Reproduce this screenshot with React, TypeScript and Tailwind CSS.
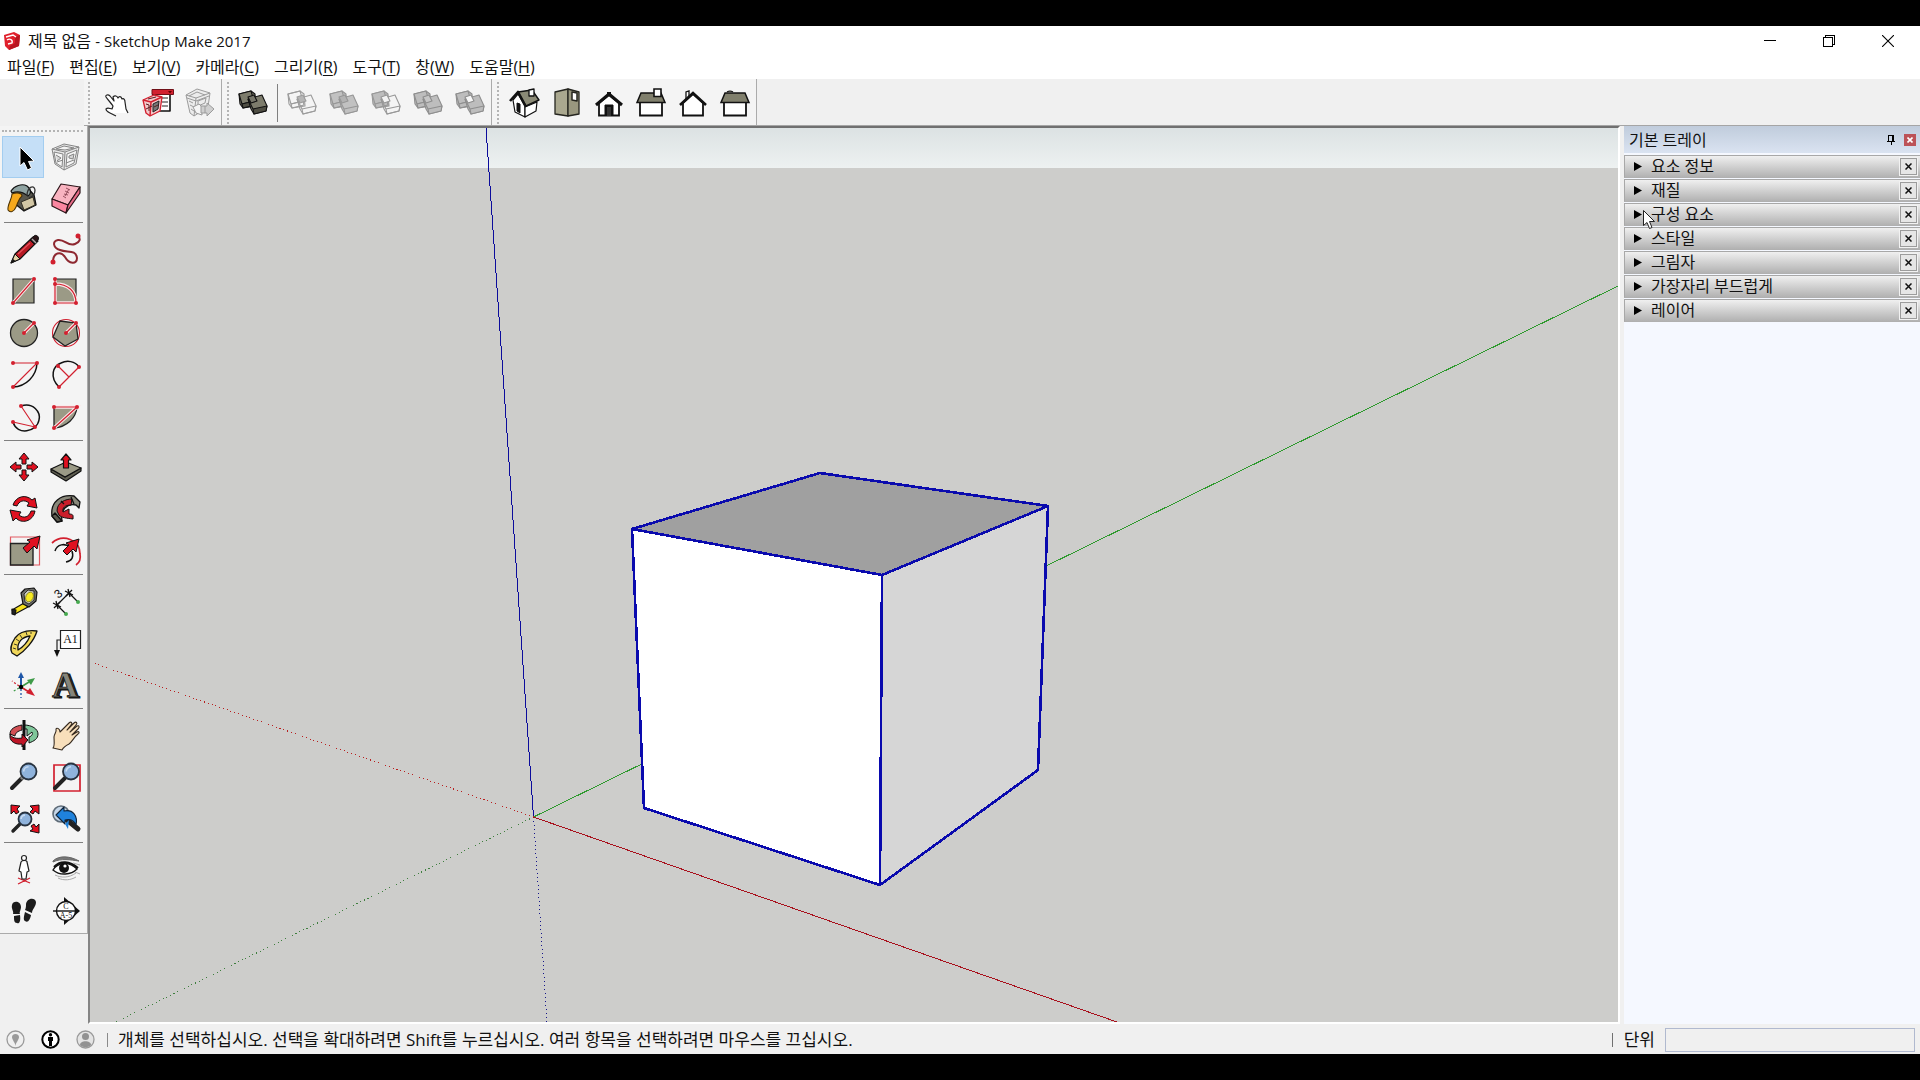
import { useState } from 'react';
import type { ReactNode } from 'react';

const RED = '#e01020';
const CRIMSON = '#d2202f';
const STONE = '#9b9a86';
const INK = '#111111';

// ── Data ─────────────────────────────────────────────────────────────────

const MENUS = [
  { label: '파일', hotkey: 'F' },
  { label: '편집', hotkey: 'E' },
  { label: '보기', hotkey: 'V' },
  { label: '카메라', hotkey: 'C' },
  { label: '그리기', hotkey: 'R' },
  { label: '도구', hotkey: 'T' },
  { label: '창', hotkey: 'W' },
  { label: '도움말', hotkey: 'H' },
];

const PANELS = ['요소 정보', '재질', '구성 요소', '스타일', '그림자', '가장자리 부드럽게', '레이어'];

type Tool = { name: string; art: ReactNode };

// ── Shared icon parts ────────────────────────────────────────────────────

function Icon({ children }: { children: ReactNode }) {
  return (
    <svg className="block h-8 w-8 shrink-0 overflow-visible" viewBox="0 0 32 32" fill="none" aria-hidden="true">
      {children}
    </svg>
  );
}

function Dots({ at }: { at: [number, number][] }) {
  return (
    <>
      {at.map(([x, y]) => (
        <circle key={`${x}-${y}`} cx={x} cy={y} r="2" fill={CRIMSON} />
      ))}
    </>
  );
}

// red guide line with a light halo so it reads over a filled face
function Guide({ d }: { d: string }) {
  return (
    <>
      <path d={d} stroke="#fbe9ea" strokeWidth="3.4" />
      <path d={d} stroke={CRIMSON} strokeWidth="1.2" />
    </>
  );
}

function Arrow({ d }: { d: string }) {
  return <path d={d} fill={RED} stroke={INK} strokeWidth="1" strokeLinejoin="round" />;
}

function Lens({ cx, cy, r }: { cx: number; cy: number; r: number }) {
  return (
    <>
      <circle cx={cx} cy={cy} r={r} fill="#8fb3dc" stroke="#27323f" strokeWidth="1.8" />
      <path
        d={`M${cx - r * 0.6} ${cy} A${r * 0.6} ${r * 0.6} 0 0 1 ${cx} ${cy - r * 0.6}`}
        stroke="#c9dcf1"
        strokeWidth="1.6"
      />
    </>
  );
}

// ── Solid tools: two overlapping slabs ───────────────────────────────────

type SlabProps = { back: string; front: string; overlap: string; line: string; side?: string };

function Slabs({ back, front, overlap, line, side }: SlabProps) {
  return (
    <g stroke={line} strokeWidth="1.1" strokeLinejoin="round">
      <path d="M2 7 L14 4 L18 7 L19 19 L6 21 L3 17 Z" fill={back} />
      <path d="M2 7 L14 4 L17 14 L5 17 Z" fill={back} />
      <path d="M5 17 L17 14 L18 18 L6 21 Z" fill={side ?? back} />
      <path d="M11 12 L25 8 L30 19 L29 24 L17 27 L14 22 Z" fill={front} />
      <path d="M16 22 L30 19 L29 24 L17 27 Z" fill={side ?? front} />
      <path d="M16 22 L11 12" />
      <path d="M11 10 L17 8 L20 14 L14 16 Z" fill={overlap} />
    </g>
  );
}

// ── House views ──────────────────────────────────────────────────────────

const isoHouse = (
  <g stroke={INK} strokeLinejoin="round">
    <path d="M4 13 L9 7 L16 19 L16 30 L6 25 Z" fill="#fff" strokeWidth="1.2" />
    <path d="M16 20 L28 15 L27 24 L16 30 Z" fill="#fff" strokeWidth="1.2" />
    <path d="M9 5 L23 3 L30 13 L17 19 Z" fill="#8b8a76" strokeWidth="1.4" />
    <path d="M1 14 L9 5 L17 20" strokeWidth="2.6" />
    <path d="M8 16 L11 17 V26 L8 24 Z" fill={INK} strokeWidth="1" />
    <path d="M20 3 L25 2 V9 L20 9 Z" fill="#fff" strokeWidth="1.3" />
  </g>
);

const topHouse = (
  <g stroke="#25251f" strokeLinejoin="round">
    <path d="M4 5 L17 2 V29 L4 27 Z" fill="#aaa88f" strokeWidth="1.3" />
    <path d="M17 2 L28 5 V27 L17 29 Z" fill="#99977f" strokeWidth="1.3" />
    <path d="M21 5 L26 6 V14 L21 13 Z" fill="#fff" strokeWidth="1.5" />
  </g>
);

const frontHouse = (
  <g stroke={INK}>
    <path d="M6 16 V28.5 H26 V16 L16 8 Z" fill="#fff" strokeWidth="1.8" />
    <path d="M3 18 L16 7 L29 18" strokeWidth="3" />
    <path d="M14 6 H18" strokeWidth="2" />
    <path d="M12 29 V18 H20 V29" fill={INK} strokeWidth="1" />
    <path d="M14 29 V20 H18 V29 Z" fill="#333" stroke="none" />
  </g>
);

const rightHouse = (
  <g stroke={INK}>
    <path d="M5 15 H27 V28.5 H5 Z" fill="#fff" strokeWidth="1.8" />
    <path d="M6 6 H26 L30 15.5 H2 Z" fill="#807f6c" strokeWidth="1.5" />
    <path d="M19 2 H26 V9.5 H19 Z" fill="#fff" strokeWidth="1.6" />
  </g>
);

const backHouse = (
  <g stroke={INK}>
    <path d="M9 13 V5 L12 4 V10" fill="#fff" strokeWidth="1.3" />
    <path d="M6 16 L16 7 L26 16 V28.5 H6 Z" fill="#fff" strokeWidth="1.8" />
    <path d="M3 18 L16 6 L29 18" strokeWidth="2.6" />
  </g>
);

const leftHouse = (
  <g stroke={INK}>
    <path d="M5 15 H27 V28.5 H5 Z" fill="#fff" strokeWidth="1.8" />
    <path d="M8 5 Q11 3 14 5" fill="#807f6c" strokeWidth="1.2" />
    <path d="M6 6 H26 L30 15.5 H2 Z" fill="#807f6c" strokeWidth="1.5" />
  </g>
);

// ── Top toolbars ─────────────────────────────────────────────────────────

const WAREHOUSE_TOOLS: Tool[] = [
  {
    name: '모델 가져오기',
    art: (
      <path
        d="M10 26 L16 29 M10 26 C8 25 6 23 6 22 C8 20 10 22 12 22 L13 19 C11 16 8 13 6 10 C5 8 8 7 10 9 L14 14 L13 10 C15 8 17 9 18 11 C19 9 21 9 22 12 C24 11 25 13 25 15 L26 22 L28 26"
        fill="#fff"
        stroke="#222"
        strokeWidth="1.2"
        strokeLinejoin="round"
      />
    ),
  },
  {
    name: '3D 웨어하우스',
    art: (
      <g strokeLinejoin="round">
        <path d="M11 7 H28 V24 H11 Z" fill="#fff" stroke={INK} strokeWidth="1.6" />
        <path d="M20 11 H26 M20 15 H26 M20 19 H26" stroke="#222" />
        <path d="M10 2.5 H31.5 V7.5 H10 Z" fill={CRIMSON} stroke="#701018" />
        <path d="M26 4 H30 L28 6.5 Z" fill="#600" />
        <path d="M1 13 L12 8 L20 10 L18 24 L8 29 L4 26 Z" fill="#f3c9cb" stroke={CRIMSON} strokeWidth="1.3" />
        <path d="M1 13 L9 15 L20 10 M9 15 L8 29" stroke={CRIMSON} strokeWidth="1.5" />
        <path d="M11 17 L17 14 L16 22 L11 25 Z" fill="#777" stroke="#222" />
        <path d="M4 17 L7 18 V24 M4 22 L10 19 M12 20 L16 18 M6 12 L14 10" stroke="#5a1c20" />
      </g>
    ),
  },
  {
    name: '모델 공유',
    art: (
      <g stroke="#9b9b9b" strokeLinejoin="round">
        <path d="M2 8 L13 2 L26 6 L24 20 L10 29 L6 26 Z" fill="#ececec" />
        <path d="M2 8 L12 11 L26 6 M12 11 L10 29 M5 9 L13 5 L21 8 M3 11 L12 14 L25 9" />
        <path d="M14 14 L22 11 L21 16 L14 19 Z M5 14 L9 16 M6 18 L10 20 M7 22 L10 24" />
        <path d="M9 20 L15 17 L18 20 V28 L12 26 Z" fill="#f5f5f5" />
        <path d="M17 19 H23 V16 L30 22 L23 29 V26 H17 Z M21 19 V26" fill="#cfcfcf" />
      </g>
    ),
  },
];

const SHELL_TOOL: Tool = {
  name: '외부 쉘',
  art: <Slabs back="#7d7c6c" front="#7d7c6c" overlap="#77766a" line={INK} side="#4f4e43" />,
};

const SOLID_TOOLS: Tool[] = [
  { name: '교차', art: <Slabs back="none" front="none" overlap="#b5b5b5" line="#9c9c9c" /> },
  { name: '합치기', art: <Slabs back="#c1c1c1" front="#c1c1c1" overlap="#b2b2b2" line="#969696" /> },
  { name: '빼기', art: <Slabs back="#bdbdbd" front="none" overlap="#f3f3f3" line="#989898" /> },
  { name: '자르기', art: <Slabs back="#bdbdbd" front="#bdbdbd" overlap="#c6c6c6" line="#8e8e8e" /> },
  { name: '분할', art: <Slabs back="#bdbdbd" front="#bdbdbd" overlap="#f6f6f6" line="#8e8e8e" /> },
];

const VIEW_TOOLS: Tool[] = [
  { name: '등각', art: isoHouse },
  { name: '평면', art: topHouse },
  { name: '정면', art: frontHouse },
  { name: '우측면', art: rightHouse },
  { name: '배면', art: backHouse },
  { name: '좌측면', art: leftHouse },
];

// ── Large tool set (left side) ───────────────────────────────────────────

const SELECT: Tool = {
  name: '선택',
  art: <path d="M13 6 V25 L17 21.5 L20.5 29 L24.5 27 L21.5 20.5 L27 20 Z" fill="#000" stroke="#fff" strokeWidth="1" />,
};

const TOOL_GROUPS: Tool[][] = [
  [
    SELECT,
    {
      name: '구성 요소 만들기',
      art: (
        <g stroke="#858585" strokeWidth="1" strokeLinejoin="round">
          <path d="M3 8 L15 3 L30 6 L27 23 L15 29 L6 23 Z" fill="#e8e8e8" />
          <path d="M3 8 L16 11 L30 6 M16 11 L15 29" />
          <path d="M7 8 L15 5 L25 7 L16 9 Z" fill="#f3f3f3" />
          <path d="M5 11 L14 13 L13 26 L7 22 Z" fill="#f5f5f5" />
          <path d="M18 13 L28 9 L25 22 L17 26 Z" fill="#f5f5f5" />
          <path d="M7 14 L12 17 L8 20 M20 15 L25 13 L24 18 L20 17 Z M8 21 L14 19 M17 22 L25 19" fill="#d5d5d5" />
        </g>
      ),
    },
    {
      name: '페인트통',
      art: (
        <g strokeLinejoin="round">
          <path d="M6 9 L19 3 L27 12 L29 22 L17 28 L7 20 Z" fill="#57564d" stroke={INK} strokeWidth="1.3" />
          <path d="M14 19 L26 14 L28 22 L17 27 Z" fill="#d3c7a5" stroke="#332f24" strokeWidth="1" />
          <path d="M4 8 C7 3 15 0 20 3 C25 7 24 11 21 13 C16 9 10 8 5 10 Z" fill="#8fa3a2" stroke={INK} strokeWidth="1.2" />
          <path d="M20 13 C20 4 27 1 28 7 C28 11 25 14 22 15" stroke="#333" strokeWidth="1.3" />
          <path d="M5 11 C10 9 15 10 15 13 C11 16 11 20 9 24 C7 29 3 30 1 27 C0 22 5 16 5 11 Z" fill="#f5a81c" stroke="#4b3308" strokeWidth="1.1" />
        </g>
      ),
    },
    {
      name: '지우개',
      art: (
        <g stroke="#2b1418" strokeWidth="1.2" strokeLinejoin="round">
          <path d="M12 1 L31 4 L19 22 L3 16 Z" fill="#f9b3c0" />
          <path d="M3 16 L19 22 L17 30 L3 23 Z" fill="#fb86a0" />
          <path d="M19 22 L31 4 V10 L17 30 Z" fill="#e76c88" />
          <path d="M14 13 L17 15 M15 11 L19 12 M16 8 L20 10 M17 5 L21 7 M16 13 L20 6" stroke="#8b4553" strokeWidth="0.9" />
        </g>
      ),
    },
  ],
  [
    {
      name: '선',
      art: (
        <g strokeLinejoin="round">
          <path d="M4 30 L8 21 L26 4 L31 8 L13 26 Z" fill="#b71923" stroke={INK} strokeWidth="1.2" />
          <path d="M4 30 L8 21 L13 26 Z" fill="#e6d3a8" stroke={INK} strokeWidth="1" />
          <path d="M4 30 L6 26 L8.5 28 Z" fill={INK} />
          <path d="M23 7 L27 3 C29 1 33 4 31 7 L27 11 Z" fill="#2a1517" stroke={INK} />
          <path d="M25 6 L29 10" stroke="#aaa" strokeWidth="1.4" />
          <path d="M11 21 L23 10" stroke="#e8505a" strokeWidth="1.2" />
        </g>
      ),
    },
    {
      name: '자유 곡선',
      art: (
        <>
          <path
            d="M4 29 C4 19 12 18 16 24 C20 31 28 32 28 25 C27 16 18 20 11 17 C4 15 3 8 9 7 C16 6 19 14 26 11 C31 9 32 6 29 3"
            stroke="#8e2830"
            strokeWidth="2"
          />
          <circle cx="4" cy="29" r="2.5" fill={CRIMSON} />
          <circle cx="29" cy="3" r="2.5" fill={CRIMSON} />
        </>
      ),
    },
    {
      name: '대각선',
      art: (
        <>
          <path d="M6 4 H27 V28 H6 Z" fill={STONE} stroke="#222" strokeWidth="1.2" />
          <Guide d="M6 28 L27 4" />
          <Dots at={[[6, 28], [27, 4]]} />
        </>
      ),
    },
    {
      name: '회전된 직사각형',
      art: (
        <>
          <path d="M6 4 H27 V28 H6 Z" fill={STONE} stroke="#222" strokeWidth="1.2" />
          <Guide d="M6 4 V28 H27 C27 16 19 9 6 9" />
          <Dots at={[[6, 4], [6, 9], [6, 28], [27, 28]]} />
        </>
      ),
    },
    {
      name: '원',
      art: (
        <>
          <circle cx="17" cy="16" r="13.5" fill={STONE} stroke="#222" strokeWidth="1.3" />
          <Guide d="M17 16 L27 6" />
          <Dots at={[[17, 16], [27, 6]]} />
        </>
      ),
    },
    {
      name: '다각형',
      art: (
        <>
          <circle cx="17" cy="16" r="13.5" stroke={CRIMSON} strokeWidth="1.1" />
          <path d="M11 4 L27 6 L29 22 L16 29 L4 20 Z" fill={STONE} stroke="#222" strokeWidth="1.3" />
          <Guide d="M17 16 L27 6" />
          <Dots at={[[17, 16], [27, 6]]} />
        </>
      ),
    },
    {
      name: '호',
      art: (
        <>
          <path d="M30 4 A25 25 0 0 1 6 28" stroke={INK} strokeWidth="1.5" />
          <path d="M6 4 H30 L6 28" stroke={CRIMSON} strokeWidth="1.1" />
          <Dots at={[[6, 4], [30, 4], [6, 28]]} />
        </>
      ),
    },
    {
      name: '2점 호',
      art: (
        <>
          <path d="M10 28 C0 18 4 7 12 4 C18 1 26 2 30 8" stroke={INK} strokeWidth="1.5" />
          <path d="M30 8 L10 28 M9 7 L20 18" stroke={CRIMSON} strokeWidth="1.2" />
          <Dots at={[[9, 7], [30, 8], [10, 28]]} />
        </>
      ),
    },
    {
      name: '3점 호',
      art: (
        <>
          <path d="M14 5 C26 1 34 11 32 19 C30 31 10 35 6 21" stroke={INK} strokeWidth="1.5" />
          <path d="M14 5 L28 26 L6 21" stroke={CRIMSON} strokeWidth="1.1" />
          <Dots at={[[14, 5], [28, 26], [6, 21]]} />
        </>
      ),
    },
    {
      name: '파이',
      art: (
        <>
          <path d="M5 6 H28 C27 17 18 26 5 27 Z" fill={STONE} stroke="#222" strokeWidth="1.3" />
          <Guide d="M5 6 H28 L5 27" />
          <Dots at={[[5, 6], [28, 6], [5, 27]]} />
        </>
      ),
    },
  ],
  [
    {
      name: '이동',
      art: (
        <>
          <Arrow d="M17 2 L22 8 H19 V13 H15 V8 H12 Z" />
          <Arrow d="M17 30 L22 24 H19 V19 H15 V24 H12 Z" />
          <Arrow d="M3 16 L9 11 V14 H14 V18 H9 V21 Z" />
          <Arrow d="M31 16 L25 11 V14 H20 V18 H25 V21 Z" />
        </>
      ),
    },
    {
      name: '밀기/끌기',
      art: (
        <g stroke={INK} strokeWidth="1.2" strokeLinejoin="round">
          <path d="M2 18 L16 26 L32 17 V20 L17 30 L2 21 Z" fill="#5f5e50" />
          <path d="M2 18 L17 11 L32 17 L16 26 Z" fill={STONE} />
          <path d="M17 3 L22 9 H19.5 V17 H14.5 V9 H12 Z" fill={RED} />
        </g>
      ),
    },
    {
      name: '회전',
      art: (
        <>
          <Arrow d="M6 12 C9 3 19 1 25 7 L28 5 L30 15 L20 13 L22 10 C17 6 12 8 10 13 Z" />
          <Arrow d="M28 18 C26 29 14 31 9 25 L6 28 L3 17 L14 19 L12 22 C17 26 22 24 24 18 Z" />
        </>
      ),
    },
    {
      name: '따라가기',
      art: (
        <g stroke={INK} strokeWidth="1.3" strokeLinejoin="round">
          <path d="M3 23 C1 9 12 1 25 3 L31 9 L30 15 L27 12 C19 10 11 16 13 28 L8 29 Z" fill="#89887a" />
          <path d="M3 23 L6 20 L13 28 L8 29 Z" fill="#5d5c50" />
          <path d="M8 18 C8 9 17 6 23 6 L22 12 C16 12 13 15 14 19 L20 16 V21 C25 21 24 23 24 26 C17 25 13 25 10 22 Z" fill="#cb1f2b" strokeWidth="1" />
          <path d="M22 4 L25 11 M12 8 L15 11" />
        </g>
      ),
    },
    {
      name: '배율',
      art: (
        <>
          <path d="M3.5 2 H32.5 V30 H3.5 Z" stroke="#e25b62" strokeWidth="1.2" />
          <path d="M3.5 8.5 H26 V30 H3.5 Z" fill={STONE} stroke="#222" strokeWidth="1.4" />
          <Arrow d="M33 1 L30 14 L27 11 L20 18 L16 13 L23 7 L20 5 Z" />
        </>
      ),
    },
    {
      name: '오프셋',
      art: (
        <>
          <path d="M3 8 C14 -2 31 5 31 19 C32 24 30 28 27 30" stroke={CRIMSON} strokeWidth="1.7" />
          <path d="M6 16 C8 9 16 8 21 12 M23 16 C25 22 23 26 17 27" stroke={INK} strokeWidth="1.5" />
          <Arrow d="M30 4 L27 17 L24 14 L18 20 L14 16 L20 10 L17 8 Z" />
        </>
      ),
    },
  ],
  [
    {
      name: '줄자 도구',
      art: (
        <g stroke={INK} strokeWidth="1.2" strokeLinejoin="round">
          <path d="M5 25 L17 18 L21 22 L8 29 Z" fill="#f7e11c" />
          <path d="M5 24 L9 25 L8 30 L5 29 Z" fill="#222" />
          <path d="M14 8 L18 4 L27 3 L30 7 L29 16 L22 22 L16 19 Z" fill="#6f6f6b" />
          <path d="M17 9 L21 5 L27 6 L27 15 L22 19 L18 17 Z" fill="#c9c9c0" strokeWidth="0.8" />
          <ellipse cx="22.5" cy="12" rx="3.6" ry="5" fill="#f7ea22" stroke="#8a8412" strokeWidth="0.8" transform="rotate(25 22.5 12)" />
        </g>
      ),
    },
    {
      name: '치수',
      art: (
        <g stroke={INK} strokeWidth="1.2">
          <path d="M8 20 L20 8 M20 8 L28 16 M8 20 L16 28" />
          <path d="M4 18 L12 22 M7 16 L9 24 M5 23 L11 17 M16 6 L24 10 M19 4 L21 12 M17 11 L23 5" strokeWidth="1.3" />
          <circle cx="29" cy="17" r="2" fill="#45a94e" stroke="none" />
          <circle cx="17" cy="29" r="2" fill="#45a94e" stroke="none" />
          <text x="6" y="13" fontSize="12" stroke="none" fill={INK} fontFamily="Liberation Sans, sans-serif" transform="rotate(-40 9 9)">3</text>
        </g>
      ),
    },
    {
      name: '각도기',
      art: (
        <g stroke={INK} strokeLinejoin="round">
          <path
            d="M10 29 C18 24 27 14 30 4 C21 3 13 4 8 11 C4 17 3 23 5 26 Z M11 23 C10 15 15 10 23 9 C21 14 16 20 11 23 Z"
            fill="#f1d75a"
            fillRule="evenodd"
            strokeWidth="1.3"
          />
          <path d="M6 21 L9 22 M7 17 L10 18 M9 12 L12 14 M13 8 L15 11 M19 5 L20 8 M24 5 V7" strokeWidth="0.8" />
        </g>
      ),
    },
    {
      name: '텍스트',
      art: (
        <>
          <path d="M12 13 H8 V24" stroke="#222" strokeWidth="1.2" />
          <path d="M5 23 H11 L8 30 Z" fill={INK} />
          <path d="M11.5 3.5 H31.5 V21.5 H11.5 Z" fill="#fff" stroke="#222" strokeWidth="1.2" />
          <text x="21.5" y="16" fontSize="12" textAnchor="middle" fill={INK} fontFamily="Liberation Serif, serif">A1</text>
        </>
      ),
    },
    {
      name: '축',
      art: (
        <>
          <path d="M14 18 V8" stroke="#1f57a8" strokeWidth="2" />
          <path d="M14 3 L17 9 H11 Z" fill="#1f57a8" />
          <path d="M14 18 L22 13" stroke="#3f9b48" strokeWidth="1.6" />
          <path d="M28 9 L24 16 L20 11 Z" fill="#3f9b48" />
          <path d="M14 18 L22 23" stroke={CRIMSON} strokeWidth="1.6" />
          <path d="M28 27 L19 24 L23 19 Z" fill={CRIMSON} />
          <path d="M14 20 V29" stroke="#1f57a8" strokeWidth="1.3" strokeDasharray="2 2" />
          <path d="M12 19 L5 23" stroke="#3f9b48" strokeWidth="1.3" strokeDasharray="2 2" />
          <path d="M12 17 L5 12" stroke={CRIMSON} strokeWidth="1.3" strokeDasharray="2 2" />
          <circle cx="14" cy="18" r="2.2" fill="#000" />
        </>
      ),
    },
    {
      name: '3D 텍스트',
      art: (
        <g fontFamily="Liberation Serif, serif" fontWeight="700" fontSize="36" textAnchor="middle">
          <text x="18" y="29" fill="#35352f" stroke={INK} strokeWidth="1.2">A</text>
          <text x="16" y="28" fill="#85857b" stroke={INK} strokeWidth="0.8">A</text>
        </g>
      ),
    },
  ],
  [
    {
      name: '궤도',
      art: (
        <g strokeLinejoin="round" stroke={INK} strokeWidth="1">
          <path d="M15 6 C8 7 3 10 3 15 L8 17 C8 14 11 12 15 11 Z" fill="#d25055" />
          <path d="M17 6 C25 6 31 10 31 15 C31 20 27 22 22 24 V18 C25 17 26 15 25 13 L20 17 V10 L17 10 Z" fill="#7fc69a" />
          <path d="M17 1 V31" strokeWidth="3" />
          <path d="M3 15 C4 19 10 20 15 19 V15 L21 21 L15 28 V25 C8 26 3 22 3 18 Z" fill="#bd1526" />
        </g>
      ),
    },
    {
      name: '이동 시점',
      art: (
        <path
          d="M4 29 C6 27 5 22 5 18 C5 15 8 13 7 10 C8 8 11 10 11 13 L20 4 C22 2 24 4 22 6 L18 11 L25 4 C27 2 29 4 27 6 L21 13 L28 7 C30 6 31 8 29 10 L23 16 L28 13 C30 12 31 14 29 15 C25 18 23 23 20 25 C16 27 14 29 13 31 Z"
          fill="#f8dfbb"
          stroke="#372b20"
          strokeWidth="1.1"
          strokeLinejoin="round"
        />
      ),
    },
    {
      name: '확대/축소',
      art: (
        <>
          <path d="M15 17 L5 27" stroke="#222" strokeWidth="4" strokeLinecap="round" />
          <path d="M16 16 L14 18" stroke="#888" strokeWidth="3" />
          <Lens cx={21.5} cy={10.5} r={8} />
        </>
      ),
    },
    {
      name: '확대/축소 창',
      art: (
        <>
          <path d="M5 4 H31 V30 H5 Z" stroke={CRIMSON} strokeWidth="1.7" />
          <path d="M16 17 L6 27" stroke="#222" strokeWidth="4" strokeLinecap="round" />
          <Lens cx={22} cy={10.5} r={8} />
        </>
      ),
    },
    {
      name: '범위 확대/축소',
      art: (
        <>
          <path d="M13 21 L6 28" stroke="#222" strokeWidth="3.4" strokeLinecap="round" />
          <Lens cx={18} cy={16} r={6.5} />
          <Arrow d="M4 2 L13 3 L10 6 L12 9 L9 11 L7 8 L4 11 Z" />
          <Arrow d="M32 2 L23 3 L26 6 L23 9 L26 11 L28 8 L32 11 Z" />
          <Arrow d="M32 30 L23 28 L26 26 L24 23 L27 21 L29 24 L32 21 Z" />
        </>
      ),
    },
    {
      name: '이전',
      art: (
        <>
          <circle cx="12" cy="11" r="8" fill="#c5d6e8" stroke="#5f6c78" strokeWidth="1.6" />
          <path d="M18 17 L29 26" stroke="#222" strokeWidth="5" strokeLinecap="round" />
          <path d="M7 12 L15 4 V8 C24 6 29 13 27 22 C25 17 21 16 16 17 V21 Z" fill="#1f82dc" stroke="#10253c" strokeWidth="1.1" strokeLinejoin="round" />
          <path d="M16 21 L20 17 L19 26 Z" fill="#1f82dc" />
        </>
      ),
    },
  ],
  [
    {
      name: '카메라 배치',
      art: (
        <>
          <path d="M11 31 L23 25 M11 25 L23 30 M17 24 V29" stroke={CRIMSON} strokeWidth="1.3" />
          <path d="M14 9 C15 7 20 7 20 9 L22 18 L20 19 L19 26 H15 L14 19 L12 18 Z" fill="#fff" stroke="#222" strokeWidth="1.2" strokeLinejoin="round" />
          <circle cx="17" cy="5" r="2.5" fill="#fff" stroke="#222" strokeWidth="1.2" />
        </>
      ),
    },
    {
      name: '둘러보기',
      art: (
        <>
          <path d="M4 8 C10 2 21 3 30 8 C22 7 12 5 4 9 Z" fill="#777" stroke="#666" strokeWidth="1" />
          <path d="M4 17 C9 9 20 8 28 16 C22 22 11 23 4 17 Z" fill="#fff" stroke={INK} strokeWidth="1.4" />
          <path d="M5 14 C11 7 21 8 29 15" stroke={INK} strokeWidth="2" />
          <circle cx="15" cy="15" r="5" fill={INK} />
          <circle cx="16" cy="13" r="1.6" fill="#fff" />
          <path d="M6 22 C12 25 20 25 27 20 M9 25 C15 28 22 27 27 24 M24 10 L31 12 M26 19 L31 21" stroke="#aaa" strokeWidth="1" />
        </>
      ),
    },
    {
      name: '걷기',
      art: (
        <g fill="#1c1c1c">
          <path d="M5 10 C6 5 14 6 14 12 C14 15 12 17 13 19 L6 19 C7 16 4 14 5 10 Z" />
          <path d="M7 21 L13 20 C14 27 12 29 10 28 C7 28 7 25 7 21 Z" />
          <path d="M19 9 C20 3 28 2 29 7 C29 12 25 14 25 18 L18 15 C19 13 19 11 19 9 Z" />
          <path d="M18 17 L24 20 C23 25 21 28 18 26 C16 25 17 21 18 17 Z" />
        </g>
      ),
    },
    {
      name: '단면',
      art: (
        <>
          <path d="M15 2 L31 16 L15 30 Z" fill={INK} />
          <circle cx="17" cy="16" r="9.5" fill="#fff" stroke={INK} strokeWidth="1.4" />
          <path d="M4 16 H30" stroke={INK} strokeWidth="1.4" />
          <g fontSize="8" textAnchor="middle" fill={INK} fontFamily="Liberation Serif, serif">
            <text x="17" y="14">C</text>
            <text x="17" y="23">A-5</text>
          </g>
        </>
      ),
    },
  ],
];

// ── Chrome pieces ────────────────────────────────────────────────────────

function TitleBar() {
  return (
    <header className="flex h-[29px] items-center bg-white pl-1">
      <svg className="h-[18px] w-4" viewBox="0 0 16 18" fill="none" aria-hidden="true">
        <path d="M0 3 L10 0 L16 3 L15 14 L5 18 L1 14 Z" fill="#e0202c" />
        <path d="M11 5 L16 3 L15 14 L5 18 L6 14 L11 11 Z" fill="#b8141f" />
        <path d="M2 5 L9 3 L12 5 M3 8 C6 6 9 8 8 11 L4 12" stroke="#fff" strokeWidth="1.4" />
      </svg>
      <h1 className="ml-2 text-base leading-6">
        제목 없음 <span className="text-[15px]">- SketchUp Make 2017</span>
      </h1>
      <div className="ml-auto flex items-center gap-[47px] pr-[26px]">
        <button type="button" aria-label="최소화" className="h-3 w-3">
          <svg className="block h-3 w-3" viewBox="0 0 12 12" shapeRendering="crispEdges">
            <path d="M0 5.5 H12" stroke="#000" />
          </svg>
        </button>
        <button type="button" aria-label="이전 크기로 복원" className="h-3 w-3">
          <svg className="block h-3 w-3" viewBox="0 0 12 12" fill="none" shapeRendering="crispEdges">
            <path d="M0.5 2.5 H9.5 V11.5 H0.5 Z M2.5 2 V0.5 H11.5 V9.5 H10" stroke="#000" />
          </svg>
        </button>
        <button type="button" aria-label="닫기" className="h-3 w-3">
          <svg className="block h-3 w-3" viewBox="0 0 12 12">
            <path d="M0 0 L12 12 M12 0 L0 12" stroke="#000" strokeWidth="1.1" />
          </svg>
        </button>
      </div>
    </header>
  );
}

function MenuBar() {
  return (
    <nav className="flex h-6 items-center gap-[15px] bg-white pl-[7px] text-base leading-6">
      {MENUS.map((menu) => (
        <button key={menu.hotkey} type="button" className="whitespace-nowrap">
          {menu.label}(<span className="underline underline-offset-2">{menu.hotkey}</span>)
        </button>
      ))}
    </nav>
  );
}

function ToolButton({ tool, active, onClick }: { tool: Tool; active?: boolean; onClick?: () => void }) {
  return (
    <button
      type="button"
      aria-label={tool.name}
      onClick={onClick}
      className={`flex h-[42px] w-[42px] items-center justify-center ${
        active ? 'border border-[#a3cdf0] bg-[#c5dff7]' : ''
      }`}
    >
      <Icon>{tool.art}</Icon>
    </button>
  );
}

function Grip() {
  return <span className="h-[42px] border-l-2 border-dotted border-[#b4b4b4]" />;
}

function TopToolbars() {
  return (
    <div className="flex h-[47px] bg-[#f0f0f0] pl-[84px]">
      <div className="flex flex-1 items-center border-b border-[#a5a5a5]">
        <div className="flex h-full items-center gap-[5px] border-r border-[#ababab] bg-[#f4f4f4] pt-[2px] pl-1">
          <Grip />
          <div className="flex">
            {WAREHOUSE_TOOLS.map((tool) => <ToolButton key={tool.name} tool={tool} />)}
          </div>
        </div>
        <div className="flex h-full items-center gap-[3px] border-r border-[#ababab] bg-[#f4f4f4] pt-[2px] pl-[5px]">
          <Grip />
          <ToolButton tool={SHELL_TOOL} />
          <span className="h-[38px] border-l border-[#808080]" />
          <div className="flex">
            {SOLID_TOOLS.map((tool) => <ToolButton key={tool.name} tool={tool} />)}
          </div>
        </div>
        <div className="flex h-full items-center gap-[5px] border-r border-[#ababab] bg-[#f4f4f4] pt-[2px] pl-[5px]">
          <Grip />
          <div className="flex">
            {VIEW_TOOLS.map((tool) => <ToolButton key={tool.name} tool={tool} />)}
          </div>
        </div>
      </div>
    </div>
  );
}

function LargeToolSet() {
  const [active, setActive] = useState(SELECT.name);

  return (
    <aside className="w-[88px] shrink-0 bg-[#f0f0f0]">
      <div className="border-r border-b border-[#ababab] bg-[#f4f4f4] pt-1 pb-px pl-[2px]">
        <div className="mr-1 h-[6px] border-t-2 border-dotted border-[#b4b4b4]" />
        {TOOL_GROUPS.map((group, i) => (
          <div key={group[0].name}>
            {i > 0 && (
              <div className="mr-1 ml-[2px] h-2 pt-[2px]">
                <div className="border-t border-[#808080]" />
              </div>
            )}
            <div className="flex flex-wrap">
              {group.map((tool) => (
                <ToolButton key={tool.name} tool={tool} active={tool.name === active} onClick={() => setActive(tool.name)} />
              ))}
            </div>
          </div>
        ))}
      </div>
    </aside>
  );
}

// ── 3D viewport ──────────────────────────────────────────────────────────

function Viewport() {
  return (
    <main className="min-w-0 flex-1 border-2 border-t-[#707070] border-r-white border-b-white border-l-[#858585] bg-[#cdcdcb]">
      <svg
        className="block h-full w-full"
        viewBox="90 128 1528 894"
        preserveAspectRatio="xMidYMid slice"
        fill="none"
        role="img"
        aria-label="정육면체 모델"
      >
        <defs>
          <linearGradient id="sky" x1="0" y1="0" x2="0" y2="1">
            <stop offset="0" stopColor="#dce2e3" />
            <stop offset="1" stopColor="#edf1f1" />
          </linearGradient>
        </defs>
        <rect x="90" y="128" width="1528" height="894" fill="#cdcdcb" />
        <rect x="90" y="128" width="1528" height="40" fill="url(#sky)" />

        {/* axes */}
        <g strokeWidth="1" shapeRendering="crispEdges">
          <path d="M486 128 L533.5 817" stroke="#0c0c9c" />
          <path d="M533.5 817 L547 1022" stroke="#15158a" strokeDasharray="1 3" />
          <path d="M533.5 817 L1618 286" stroke="#2f9a2f" />
          <path d="M533.5 817 L116 1022" stroke="#3f7f3f" strokeDasharray="1 3" />
          <path d="M533.5 817 L1117 1022" stroke="#a8101c" />
          <path d="M533.5 817 L93 663" stroke="#b82020" strokeDasharray="1 3" />
        </g>

        {/* cube */}
        <path d="M632 529 L882 575 L880 885 L644 808 Z" fill="#ffffff" />
        <path d="M882 575 L1048 506 L1038 770 L880 885 Z" fill="#d6d6d6" />
        <path d="M632 529 L820 473 L1048 506 L882 575 Z" fill="#a0a0a0" />
        <path
          d="M632 529 L820 473 L1048 506 L1038 770 L880 885 L644 808 Z M632 529 L882 575 L1048 506 M882 575 L880 885"
          stroke="#0a0aae"
          strokeWidth="2.6"
          strokeLinejoin="round"
          shapeRendering="crispEdges"
        />
      </svg>
    </main>
  );
}

// ── Tray ─────────────────────────────────────────────────────────────────

function MouseCursor() {
  return (
    <svg className="pointer-events-none absolute top-[6px] left-[18px] z-10 h-5 w-3" viewBox="0 0 12 20" aria-hidden="true">
      <path d="M0.5 0.5 V15.5 L4 12.5 L6.5 18.5 L9 17.5 L6.5 11.5 H11.5 Z" fill="#fff" stroke="#222" />
    </svg>
  );
}

function Tray() {
  return (
    <aside className="ml-1 w-[296px] shrink-0 bg-[#f5f8ff]">
      <div className="flex h-[27px] items-center bg-linear-to-b from-[#c0ccdc] to-[#dae3f1] pr-1 pl-[5px]">
        <h2 className="text-base leading-6">기본 트레이</h2>
        <button type="button" aria-label="자동 숨기기" className="mr-[9px] ml-auto">
          <svg className="block h-[10px] w-2" viewBox="0 0 8 10" fill="none" shapeRendering="crispEdges">
            <path d="M1.5 6 V0.5 H6 M0 6.5 H8 M4 7 V10" stroke="#000" />
            <path d="M5.5 0 V6" stroke="#000" strokeWidth="2" />
          </svg>
        </button>
        <button type="button" aria-label="트레이 닫기" className="flex h-3 w-3 items-center justify-center bg-[#bc5257]">
          <svg className="block h-[6px] w-[6px]" viewBox="0 0 6 6">
            <path d="M0.5 0.5 L5.5 5.5 M5.5 0.5 L0.5 5.5" stroke="#fff" strokeWidth="1.6" />
          </svg>
        </button>
      </div>
      <ul className="flex flex-col gap-px pt-[2px]">
        {PANELS.map((panel, i) => (
          <li
            key={panel}
            className="relative flex h-[23px] items-center border border-r-0 border-t-[#a8a8a8] border-b-[#b0b0b0] border-l-[#a8a8a8] bg-linear-to-b from-[#f0f0f0] to-[#b2b2b2] pr-[3px] pl-[9px]"
          >
            <button type="button" className="flex items-center gap-[9px] pb-px text-base leading-5">
              <svg className="block h-[9px] w-2" viewBox="0 0 8 9" aria-hidden="true">
                <path d="M0 0 L8 4.5 L0 9 Z" fill="#000" />
              </svg>
              {panel}
            </button>
            <button
              type="button"
              aria-label={`${panel} 닫기`}
              className="ml-auto flex h-[17px] w-[17px] items-center justify-center border border-[#9c9c9c] bg-[#e6e6e6] outline-1 outline-[#f2f2f2]"
            >
              <svg className="block h-[7px] w-[7px]" viewBox="0 0 7 7">
                <path d="M0.5 0.5 L6.5 6.5 M6.5 0.5 L0.5 6.5" stroke="#111" strokeWidth="1.5" />
              </svg>
            </button>
            {i === 2 && <MouseCursor />}
          </li>
        ))}
      </ul>
    </aside>
  );
}

// ── Status bar ───────────────────────────────────────────────────────────

function StatusBar() {
  return (
    <footer className="flex h-[30px] items-center bg-[#f0f0f0] pt-px text-base leading-6">
      <div className="flex gap-4 pl-[6px]">
        <button type="button" aria-label="지리적 위치">
          <svg className="block h-[19px] w-[19px]" viewBox="0 0 19 19" fill="none">
            <circle cx="9.5" cy="9.5" r="8.5" stroke="#9a9a9a" strokeWidth="1.3" />
            <path d="M9.5 16 C9 12 6 10 6 7 C6 3 13 3 13 7 C13 10 10 12 9.5 16 Z" fill="#9a9a9a" />
          </svg>
        </button>
        <button type="button" aria-label="크레딧">
          <svg className="block h-[19px] w-[19px]" viewBox="0 0 19 19" fill="none">
            <circle cx="9.5" cy="9.5" r="8.2" fill="#fff" stroke="#000" strokeWidth="2" />
            <circle cx="9.5" cy="4.8" r="1.7" fill="#000" />
            <path d="M7 7 H12 V11 H11 V16 H8 V11 H7 Z" fill="#000" />
          </svg>
        </button>
        <button type="button" aria-label="로그인">
          <svg className="block h-[19px] w-[19px]" viewBox="0 0 19 19" fill="none">
            <circle cx="9.5" cy="9.5" r="8.5" fill="#e4e4e4" stroke="#9a9a9a" strokeWidth="1.3" />
            <circle cx="9.5" cy="6.5" r="3.5" fill="#929292" />
            <path d="M4 15 C4 10 15 10 15 15 C12 18 7 18 4 15 Z" fill="#929292" />
          </svg>
        </button>
      </div>
      <p className="ml-3 flex items-center gap-[10px] text-[17px] whitespace-nowrap">
        <span className="h-[14px] border-l border-[#8a8a8a]" />
        개체를 선택하십시오. 선택을 확대하려면 Shift를 누르십시오. 여러 항목을 선택하려면 마우스를 끄십시오.
      </p>
      <div className="ml-auto flex items-center pr-[5px]">
        <span className="mr-[11px] h-[14px] border-l border-[#707070]" />
        <label htmlFor="measurement" className="mr-[10px] text-[17px]">단위</label>
        <input id="measurement" type="text" className="h-6 w-[250px] border border-[#b0b9cf] bg-[#f0f0f0] px-1 outline-none" />
      </div>
    </footer>
  );
}

export default function App() {
  return (
    <div className="flex h-screen flex-col bg-black py-[26px] font-['Open_Sans','Noto_Sans_CJK_KR',sans-serif] text-[#111]">
      <TitleBar />
      <MenuBar />
      <TopToolbars />
      <div className="flex min-h-0 flex-1 bg-[#f0f0f0]">
        <LargeToolSet />
        <Viewport />
        <Tray />
      </div>
      <StatusBar />
    </div>
  );
}
